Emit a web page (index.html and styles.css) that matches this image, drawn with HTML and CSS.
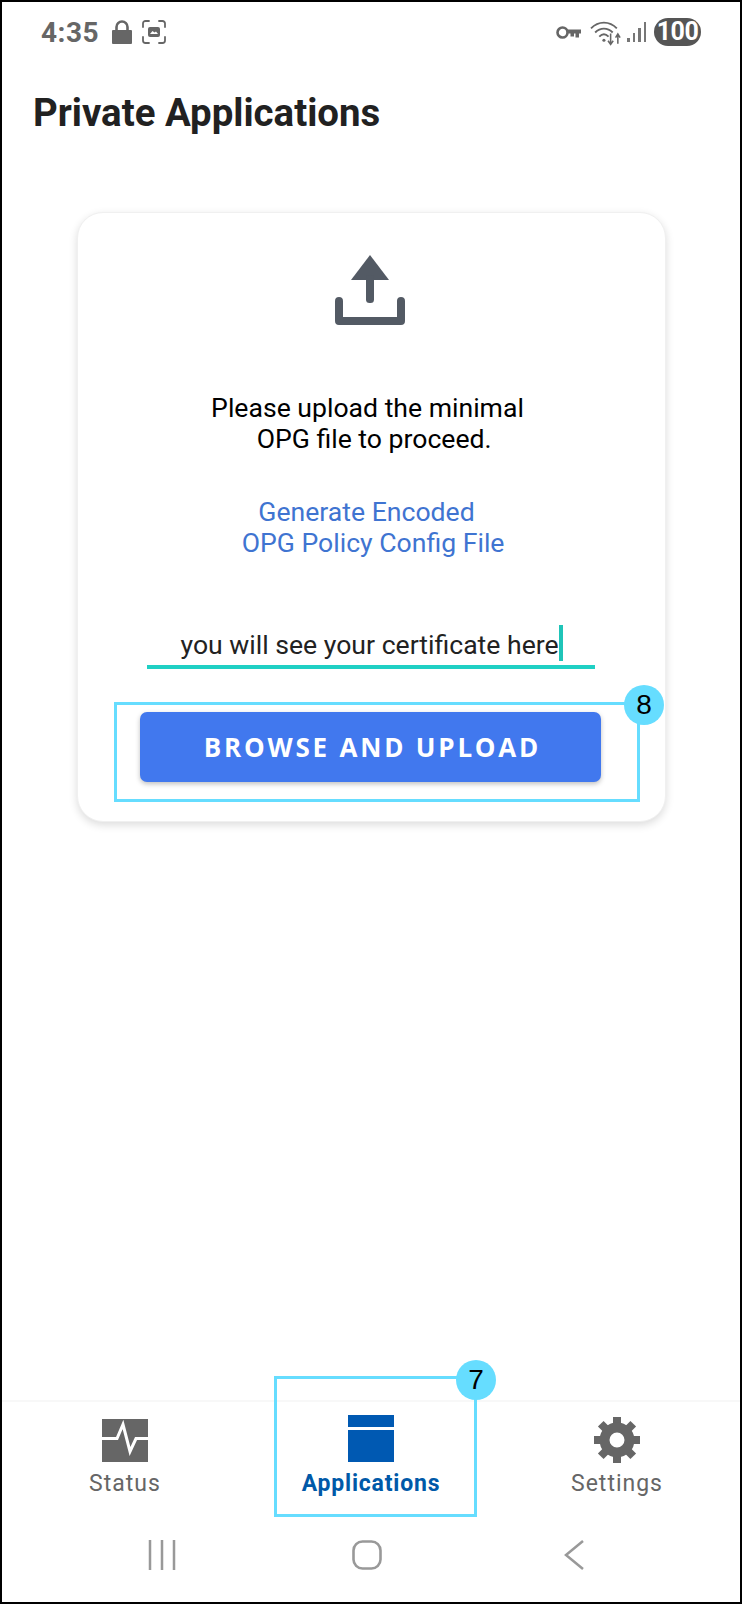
FILE: index.html
```html
<!DOCTYPE html>
<html lang="en">
<head>
  <meta charset="UTF-8">
  <meta name="viewport" content="width=device-width,initial-scale=1.0">
  <title>Private Applications</title>
  <link rel="stylesheet" href="styles.css">
</head>
<body>
  <div class="phone">

    <!-- Status bar -->
    <div class="statusbar">
      <div class="status-left">
        <span class="time">4:35</span>
        <svg class="ic-lock" viewBox="0 0 20 24"><path d="M4.500 11V7a5.500 5.500 0 0 1 11 0v4" fill="none" stroke="#666" stroke-width="2.600"/><rect x="0" y="10" width="20" height="14" rx="1" fill="#666"/></svg>
        <svg class="ic-shot" viewBox="0 0 24 24"><path d="M1 7V3.500A2.500 2.500 0 0 1 3.500 1H7M17 1h3.500A2.500 2.500 0 0 1 23 3.500V7M23 17v3.500a2.500 2.500 0 0 1-2.500 2.500H17M7 23H3.500A2.500 2.500 0 0 1 1 20.500V17" fill="none" stroke="#666" stroke-width="1.800" stroke-linecap="round"/><rect x="6" y="7" width="12" height="10" rx="2" fill="#666"/><path d="M8 14l2.500-3 2 1.500 1.500-1 2 2.500z" fill="#fff"/></svg>
      </div>
      <div class="status-right">
        <svg class="ic-key" viewBox="0 0 25 13"><circle cx="6.500" cy="6.500" r="5" fill="none" stroke="#666" stroke-width="2.600"/><path d="M11 3.500h14v4h-2v4h-3.500v-4h-1.500v3h-3.500v-3H11z" fill="#666"/></svg>
        <svg class="ic-wifi" viewBox="0 0 32 26"><g fill="none" stroke="#666" stroke-width="1.800"><path d="M1 9C8 1.500 19 1.500 26 9"/><path d="M5 13c5-5 12-5 17 0"/><path d="M9 17c3-3 6-3 9 0"/></g><circle cx="13.500" cy="20.500" r="1.500" fill="#666"/><path d="M20 14v10M17.500 21l2.500 3.500 2.500-3.500M27 24v-9M24.800 18l2.200-3.500 2.200 3.500" fill="none" stroke="#666" stroke-width="1.500"/></svg>
        <div class="signal"><i class="b1"></i><i class="b2"></i><i class="b3"></i><i class="b4"></i></div>
        <span class="battery">100</span>
      </div>
    </div>

    <h1 class="page-title">Private Applications</h1>

    <!-- Upload card -->
    <div class="card">
      <svg class="ic-upload" viewBox="0 0 70 70">
        <path d="M35 0L54 25H16z" fill="#535a64"/>
        <rect x="31" y="20" width="8" height="28" rx="3.500" fill="#535a64"/>
        <path d="M4 46v20h62V46" fill="none" stroke="#535a64" stroke-width="8" stroke-linecap="round" stroke-linejoin="round"/>
      </svg>
      <p class="msg">Please upload the minimal
  OPG file to proceed.</p>
      <a class="gen-link" href="#">Generate Encoded
  OPG Policy Config File</a>
      <div class="cert-input">
        <span class="cert-text">you will see your certificate here</span><span class="caret"></span>
      </div>
      <div class="callout callout-btn">
        <span class="badge">8</span>
        <button class="upload-btn">BROWSE AND UPLOAD</button>
      </div>
    </div>

    <!-- Bottom tabs -->
    <nav class="tabs">
      <div class="tab">
        <svg class="tab-icon ic-status" viewBox="0 0 46 43"><rect width="46" height="43" fill="#666"/><path d="M0 19.500h15l6-14 7 27 6-13h12" fill="none" stroke="#fff" stroke-width="3"/></svg>
        <span>Status</span>
      </div>
      <div class="tab tab-active callout callout-tab">
        <span class="badge">7</span>
        <svg class="tab-icon ic-apps" viewBox="0 0 46 47"><rect width="46" height="12" fill="#0059b2"/><rect y="15" width="46" height="32" fill="#0059b2"/></svg>
        <span>Applications</span>
      </div>
      <div class="tab">
        <svg class="tab-icon ic-gear" viewBox="0 0 46 46">
          <g fill="#666">
            <rect x="19" y="0" width="8" height="46" />
            <rect x="19" y="0" width="8" height="46" transform="rotate(45 23 23)"/>
            <rect x="19" y="0" width="8" height="46" transform="rotate(90 23 23)"/>
            <rect x="19" y="0" width="8" height="46" transform="rotate(135 23 23)"/>
          </g>
          <circle cx="23" cy="23" r="12.500" fill="#fff" stroke="#666" stroke-width="10"/>
        </svg>
        <span>Settings</span>
      </div>
    </nav>

    <!-- Android nav buttons -->
    <div class="sysnav">
      <svg class="sys-recent" viewBox="0 0 28 30"><path d="M2 0v30M14 0v30M26 0v30" fill="none" stroke="#999" stroke-width="2.500"/></svg>
      <svg class="sys-home" viewBox="0 0 30 30"><rect x="1.500" y="1.500" width="27" height="27" rx="9" fill="none" stroke="#999" stroke-width="2.600"/></svg>
      <svg class="sys-back" viewBox="0 0 20 30"><path d="M19 1L2 15l17 14" fill="none" stroke="#999" stroke-width="2.500"/></svg>
    </div>
  </div>
</body>
</html>
```

FILE: styles.css
```css
* {
  margin: 0;
  padding: 0;
  box-sizing: border-box;
}

body {
  font-family: Roboto, Arial, sans-serif;
  background: #fff;
}

.phone {
  width: 742px;
  height: 1604px;
  border: 2px solid #000;
  display: flex;
  flex-direction: column;
  overflow: hidden;
}

/* Status bar */
.statusbar {
  height: 56px;
  padding: 16px 39px 0 39px;
  display: flex;
  justify-content: space-between;
  align-items: flex-start;
}
.status-left,
.status-right {
  display: flex;
  align-items: center;
  height: 28px;
}
.time {
  font-size: 28px;
  font-weight: 700;
  letter-spacing: 0.5px;
  color: #666;
  margin-right: 13px;
}
.ic-lock { width: 20px; height: 24px; margin-right: 10px; }
.ic-shot { width: 24px; height: 24px; }
.ic-key { width: 25px; height: 13px; margin-right: 9px; }
.ic-wifi { width: 33px; height: 27px; margin-right: 4px; }
.signal {
  display: flex;
  align-items: flex-end;
  gap: 3px;
  height: 20px;
  margin-right: 8px;
}
.signal i { display: block; width: 2.500px; background: #777; }
.signal .b1 { height: 4px; }
.signal .b2 { height: 9px; }
.signal .b3 { height: 14px; }
.signal .b4 { height: 20px; }
.battery {
  width: 47px;
  height: 28px;
  border-radius: 14px;
  background: #555;
  color: #fff;
  font-size: 25px;
  font-weight: 700;
  line-height: 28px;
  text-align: center;
  letter-spacing: -0.5px;
}

.page-title {
  font-size: 38.400px;
  font-weight: 700;
  line-height: 44px;
  color: #212121;
  margin: 33px 0 0 31px;
}

/* Card */
.card {
  width: 589px;
  height: 610px;
  margin: 77px 0 0 75px;
  padding: 42px 2px 0 0;
  background: #fff;
  border: 1px solid #f0f0f0;
  border-radius: 26px;
  box-shadow: 0 3px 8px rgba(0,0,0,0.14);
  display: flex;
  flex-direction: column;
  align-items: center;
}
.ic-upload { width: 70px; height: 70px; flex: none; margin-right: 2px; }
.msg,
.gen-link {
  font-size: 26.600px;
  line-height: 31px;
  white-space: pre;
  text-align: center;
}
.msg {
  margin-top: 67px;
  padding-right: 6px;
  color: #000;
}
.gen-link {
  display: block;
  margin-top: 42px;
  padding-right: 8px;
  color: #3f74d1;
  text-decoration: none;
}

.cert-input {
  width: 448px;
  height: 44px;
  margin-top: 67px;
  padding-left: 34px;
  border-bottom: 4px solid #1fd0c4;
  display: flex;
  align-items: flex-start;
  font-size: 26.600px;
  color: #222;
  flex: none;
}
.cert-text { line-height: 40px; }
.caret {
  width: 4px;
  height: 36px;
  background: #1fc4b8;
}

/* Annotation boxes */
.callout {
  position: relative;
  border: 3px solid #66ddff;
}
.badge {
  position: absolute;
  width: 40px;
  height: 40px;
  border-radius: 50%;
  background: #66ddff;
  color: #000;
  font-family: "Liberation Sans", Arial, sans-serif;
  font-size: 28px;
  font-weight: 400;
  line-height: 40px;
  text-align: center;
  letter-spacing: 0;
}
.callout-btn {
  align-self: flex-start;
  width: 526px;
  height: 100px;
  margin: 33px 0 0 36px;
  padding: 7px 36px 0 23px;
  flex: none;
}
.callout-btn .badge { right: -27px; top: -20px; }
.upload-btn {
  display: block;
  width: 461px;
  height: 70px;
  padding-left: 4px;
  border: none;
  border-radius: 7px;
  background: #4178ee;
  color: #fff;
  font-family: "Open Sans", sans-serif;
  font-size: 26px;
  font-weight: 700;
  letter-spacing: 2.800px;
  box-shadow: 0 2px 5px rgba(0,0,0,0.25);
}

/* Bottom tabs */
.tabs {
  margin-top: auto;
  height: 118px;
  padding-top: 15px;
  background: #fff;
  border-top: 2px solid #f8f8f8;
  display: grid;
  grid-template-columns: 246px 246px 246px;
  align-items: start;
}
.tab {
  display: flex;
  flex-direction: column;
  align-items: center;
  font-size: 23px;
  line-height: 30px;
  letter-spacing: 1px;
  color: #666;
}
.tab-icon { display: block; margin-bottom: 7px; }
.ic-status { width: 46px; height: 43px; margin-top: 2px; }
.ic-apps { width: 46px; height: 47px; margin-bottom: 7px; }
.ic-gear { width: 46px; height: 46px; margin-bottom: 6px; }
.tab-active {
  color: #0059a8;
  font-weight: 700;
  letter-spacing: 0.800px;
}
.callout-tab {
  width: 203px;
  height: 141px;
  margin: -41px 0 0 26px;
  padding: 36px 9px 0 0;
}
.callout-tab .badge { right: -22px; top: -19px; }

/* System navigation */
.sysnav {
  height: 84px;
  padding-top: 22px;
  display: flex;
  align-items: flex-start;
}
.sys-recent { width: 28px; height: 30px; margin-left: 146px; }
.sys-home { width: 30px; height: 30px; margin-left: 176px; }
.sys-back { width: 20px; height: 30px; margin-left: 182px; }
```
